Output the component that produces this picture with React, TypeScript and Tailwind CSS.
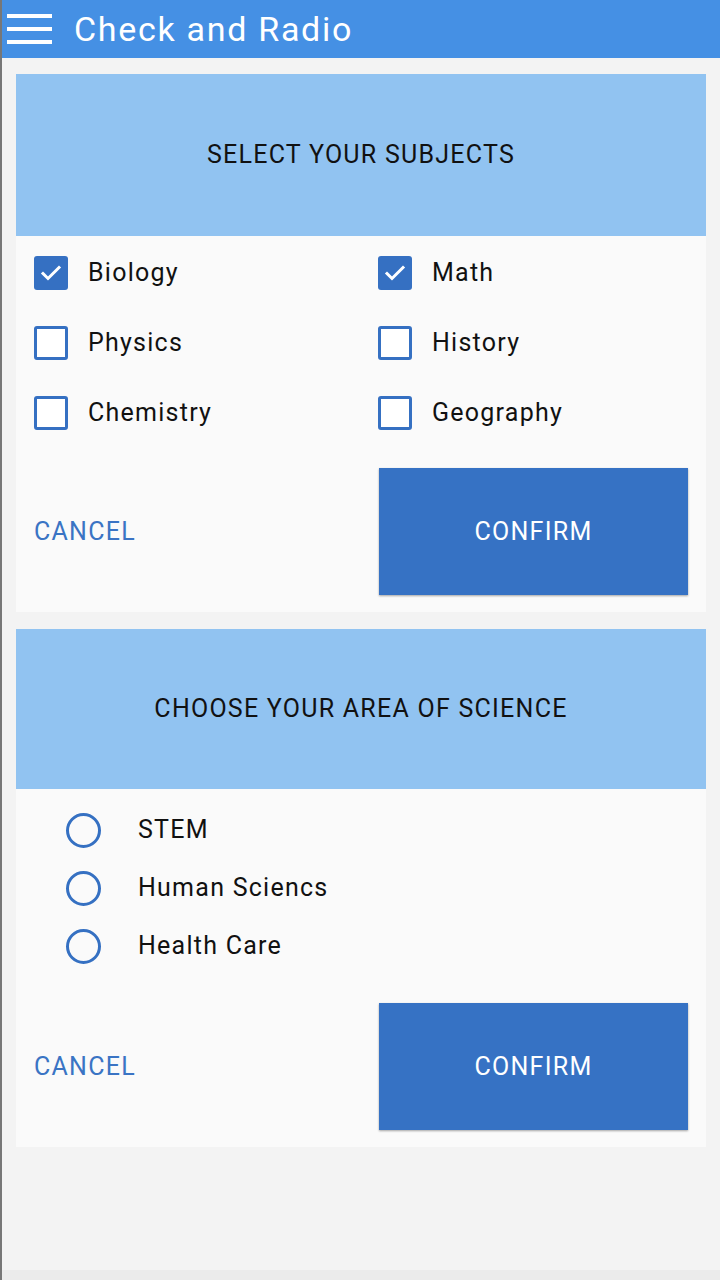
import React from "react";

function Check({ checked }: { checked: boolean }) {
  return checked ? (
    <div className="w-[34px] h-[34px] rounded-[3px] bg-[#3570c2] flex items-center justify-center">
      <svg width="24" height="24" viewBox="0 0 24 24" fill="none" stroke="white" strokeWidth="3" strokeLinecap="square">
        <path d="M4 12.5l5 5L20 6.5" />
      </svg>
    </div>
  ) : (
    <div className="w-[34px] h-[34px] rounded-[3px] border-[3px] border-[#3570c2] bg-white" />
  );
}

function Item({ label, checked }: { label: string; checked?: boolean }) {
  return (
    <div className="flex items-center h-[70px]">
      <Check checked={!!checked} />
      <span className="ml-[20px] text-[25px] tracking-[0.05em] text-[#111]">{label}</span>
    </div>
  );
}

function Radio({ label }: { label: string }) {
  return (
    <div className="flex items-center h-[58px] pl-[50px]">
      <div className="w-[35px] h-[35px] rounded-full border-[3.5px] border-[#3570c2]" />
      <span className="ml-[37px] text-[25px] tracking-[0.05em] text-[#111]">{label}</span>
    </div>
  );
}

function Buttons() {
  return (
    <div className="flex items-center">
      <div className="flex-1 pl-[18px] text-[25px] tracking-[0.05em] text-[#3a74c4]">CANCEL</div>
      <div className="w-[309px] h-[127px] mr-[18px] bg-[#3672c4] shadow-[0_1px_2px_rgba(0,0,0,0.35)] flex items-center justify-center text-[25px] tracking-[0.05em] text-white">
        CONFIRM
      </div>
    </div>
  );
}

export default function App() {
  return (
    <div
      className="w-[720px] h-[1280px] bg-[#f3f3f3] flex flex-col border-l-2 border-[#777]"
      style={{ fontFamily: "Roboto, 'Noto Sans', sans-serif" }}
    >
      <div className="h-[58px] bg-[#4590e4] flex items-center shrink-0">
        <div className="ml-[5px] w-[45px] flex flex-col gap-[9px]">
          <div className="h-[4px] bg-white" />
          <div className="h-[4px] bg-white" />
          <div className="h-[4px] bg-white" />
        </div>
        <span className="ml-[22px] text-[34px] tracking-[0.05em] text-white">Check and Radio</span>
      </div>

      <div className="mx-[14px] mt-[16px] bg-[#fafafa] pb-[17px]">
        <div className="h-[162px] bg-[#91c3f1] flex items-center justify-center text-[25px] tracking-[0.05em] text-[#111]">
          SELECT YOUR SUBJECTS
        </div>
        <div className="grid grid-cols-2 pl-[18px] pt-[2px] pb-[20px]">
          <div className="flex flex-col">
            <Item label="Biology" checked />
            <Item label="Physics" />
            <Item label="Chemistry" />
          </div>
          <div className="flex flex-col pl-[8px]">
            <Item label="Math" checked />
            <Item label="History" />
            <Item label="Geography" />
          </div>
        </div>
        <Buttons />
      </div>

      <div className="mx-[14px] mt-[17px] bg-[#fafafa] pb-[17px]">
        <div className="h-[160px] bg-[#91c3f1] flex items-center justify-center text-[25px] tracking-[0.05em] text-[#111]">
          CHOOSE YOUR AREA OF SCIENCE
        </div>
        <div className="flex flex-col pt-[12px] pb-[28px]">
          <Radio label="STEM" />
          <Radio label="Human Sciencs" />
          <Radio label="Health Care" />
        </div>
        <Buttons />
      </div>
      <div className="flex-1" />
      <div className="h-[10px] bg-[#ebebeb]" />
    </div>
  );
}
